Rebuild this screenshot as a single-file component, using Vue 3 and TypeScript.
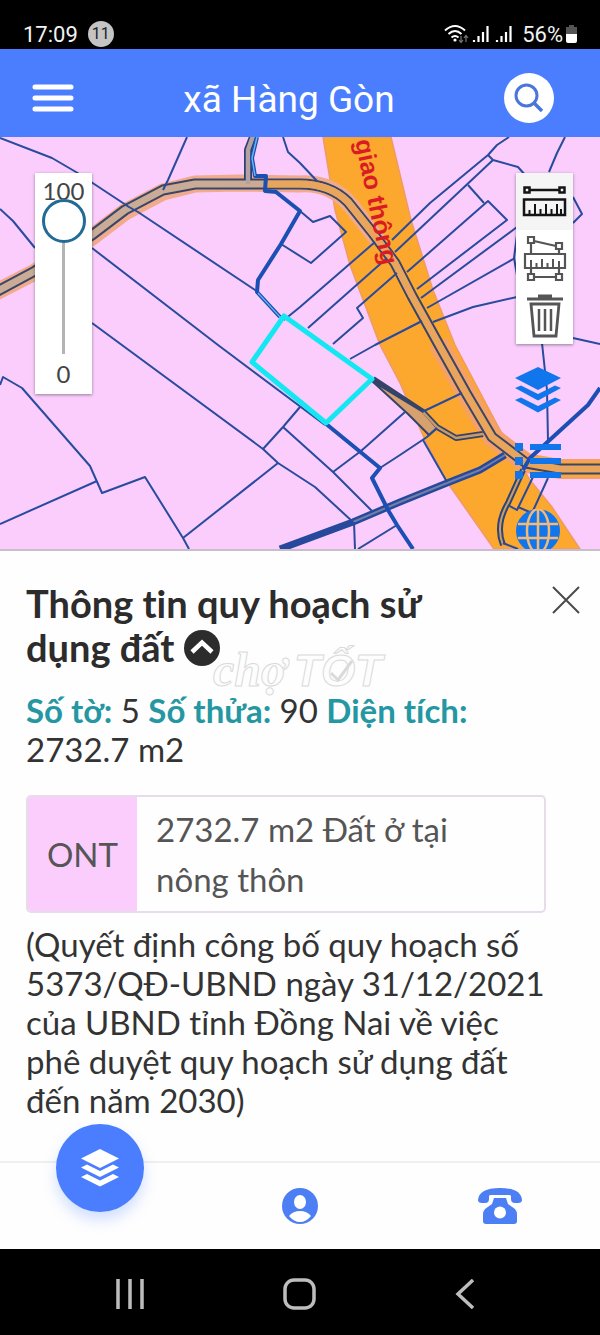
<script setup lang="ts">
import { ref } from 'vue'

const opacity = ref(100)

const boundaries: string[] = [
  'M0 138 52 158 76 172 129 207 138 212 258 292',
  'M187 137 168 180 163 190',
  'M0 209 13 221 35 248',
  'M92 248 218 345 325 425',
  'M92 323 263 449 278 463 315 487 353 522',
  'M0 385 3 377 22 388 90 466 102 493 145 477 183 538 189 549',
  'M0 524 97 481',
  'M183 538 278 463',
  'M263 449 283 427 300 407',
  'M283 427 333 472 373 512',
  'M333 472 361 451 405 412',
  'M354 522 355 549',
  'M358 549 397 525',
  'M283 137 288 152 300 163 317 181',
  'M300 211 313 222 330 216 346 232 311 263 281 244',
  'M375 242 300 307 284 320',
  'M387 258 308 328',
  'M397 273 357 308 363 318 333 344',
  'M422 321 375 345 350 359',
  'M392 240 430 203 488 155 497 145 509 137',
  'M395 252 493 160',
  'M488 155 493 160 518 167 526 176',
  'M407 272 488 201 507 220 417 289',
  'M468 185 484 203',
  'M421 298 517 227',
  'M427 308 515 258',
  'M517 235 514 258 517 275',
  'M433 322 457 313 473 307 517 297',
  'M565 137 557 153 549 172',
  'M573 197 582 214 573 223',
  'M573 338 600 344',
  'M542 343 547 390 548 441',
  'M422 412 462 393',
  'M437 428 427 437 400 455 380 468',
  'M423 440 447 482',
  'M533 477 517 510 508 505',
  'M548 478 532 513 518 507',
  'M503 543 518 549',
]

const waterways: string[] = [
  'M276 192 300 211 281 244 258 280 257 292 280 317',
  'M325 423 380 468 372 478 388 510 397 525 413 549',
  'M600 388 588 405 530 458 523 470',
]
</script>

<template>
  <div class="app">
    <div class="status">
      <span class="status-left">
        <span class="clock">17:09</span>
        <span class="count">11</span>
      </span>
      <span class="status-right">
        <svg width="70" height="22" viewBox="0 0 70 22" aria-hidden="true">
          <g fill="none" stroke="#fff" stroke-width="2">
            <path d="M1 7.5Q11 -1.500 21 7.500M4.500 11Q11 5 17.500 11M7.500 14.500Q11 11.500 14.500 14.500" />
          </g>
          <circle cx="11" cy="17" r="1.600" fill="#fff" />
          <path d="M17 13v6m-2-2 2 2.500 2-2.500M22 19v-6m-2 2 2-2.500 2 2.500" fill="none" stroke="#777" stroke-width="1.200" />
          <path d="M30 19v-2M34.500 19v-6M39 19V9M43.500 19V3" stroke="#fff" stroke-width="2.200" />
          <path d="M53 19v-2M57.500 19v-6M62 19V9M66.500 19V3" stroke="#fff" stroke-width="2.200" />
        </svg>
        <span class="clock">56%</span>
        <svg width="14" height="22" viewBox="0 0 14 22" aria-hidden="true">
          <path d="M4 2h5v2h3v7H1V4h3z" fill="#555" />
          <path d="M1 11h11v7q0 2-2 2H3q-2 0-2-2z" fill="#fff" />
        </svg>
      </span>
    </div>

    <header class="header">
      <button class="icon-btn" aria-label="Menu">
        <svg width="42" height="30" viewBox="0 0 42 30">
          <path d="M3 4H39M3 15H39M3 26H39" stroke="#fff" stroke-width="5" stroke-linecap="round" />
        </svg>
      </button>
      <h1>xã Hàng Gòn</h1>
      <button class="search" aria-label="Tìm kiếm">
        <svg width="30" height="30" viewBox="0 0 30 30">
          <circle cx="12.500" cy="12.500" r="10.500" fill="none" stroke="#4a76dc" stroke-width="3" />
          <path d="M20 20 28 28" stroke="#4a76dc" stroke-width="3.500" />
        </svg>
      </button>
    </header>

    <section class="map">
      <svg class="map-canvas" viewBox="0 137 600 412" aria-label="Bản đồ">
        <rect y="137" width="600" height="412" fill="#facdfd" />
        <path
          d="M323 137H391L411 220 433 290 455 345 500 430 530 480 552 507 580 549H494L447 482 425 440 400 383 380 345 365 305 350 265 335 210Z"
          fill="#fca72d" stroke="#f09a66" stroke-width="1.500"
        />
        <g fill="none" stroke-linejoin="round">
          <path
            d="M-4 292 35 272 92 237 125 212 163 192 195 184 240 183 300 184Q332 182 352 207L378 240"
            stroke="#f0ab8d" stroke-width="17"
          />
          <path d="M438 343 466 393 492 437 526 463 560 469H600" stroke="#f4a168" stroke-width="20" />
          <path d="M530 463 560 469H600" stroke="#f9a640" stroke-width="16" />
          <path
            d="M-4 292 35 271 92 235 125 210 163 190 195 184 240 184 300 184Q330 184 348 202L372 232 395 263 412 296 438 343 466 393 492 437 526 463 560 469H600"
            stroke="#3b4566" stroke-width="11"
          />
          <path
            d="M-4 292 35 271 92 235 125 210 163 190 195 184 240 184 300 184Q330 184 348 202L372 232 395 263 412 296"
            stroke="#c9ab96" stroke-width="7"
          />
          <path
            d="M265 184H300Q330 184 348 202L372 232 395 263 412 296 438 343 466 393 492 437 526 463 560 469H601"
            stroke="#e9a55b" stroke-width="7"
          />
          <path d="M253 137 248 150V180" stroke="#294077" stroke-width="8" />
          <path d="M253 136 248 150V184" stroke="#b5a2a0" stroke-width="4.500" />
          <path d="M257 137 252 158 255 176 266 176 265 191 277 192" stroke="#1d4fb0" stroke-width="4" />
          <path d="M257 137 252 158 255 176" stroke="#67b5f1" stroke-width="1.500" />
          <path d="M373 379 423 412 437 427 456 438 483 434" stroke="#35436a" stroke-width="6" />
          <path d="M372 381 408 414 429 435 437 428 423 412Z" fill="#d7a16d" stroke="#35436a" stroke-width="2" />
          <path d="M423 412 437 427 456 438 483 434" stroke="#c89c66" stroke-width="2.500" />
          <path d="M280 549 353 522 400 502 447 483 480 470 505 455" stroke="#27499c" stroke-width="7" />
          <path d="M353 522 400 502 447 483 480 470 505 455" stroke="#727fa9" stroke-width="2" />
          <path d="M523 470 508 503Q495 525 503 545" stroke="#2b4578" stroke-width="6" />
          <path d="M523 470 508 503Q495 525 503 545" stroke="#c99c66" stroke-width="2" />
          <path v-for="d in boundaries" :key="d" :d="d" stroke="#294b9d" stroke-width="2" />
          <path v-for="d in waterways" :key="d" :d="d" stroke="#1b4fb4" stroke-width="4" />
          <path d="M258 293 280 317" stroke="#63b6ef" stroke-width="1.200" />
          <path d="M284 316 372 379 326 423 252 362Z" stroke="#13e7f2" stroke-width="5" />
        </g>
        <text class="road-name" transform="translate(355 141) rotate(78)">giao thông</text>
      </svg>

      <div class="slider">
        <label for="opacity">{{ opacity }}</label>
        <input id="opacity" v-model.number="opacity" type="range" min="0" max="100" />
        <span>0</span>
      </div>

      <div class="tools">
        <button class="tool active" aria-label="Đo chiều dài">
          <svg width="46" height="34" viewBox="0 0 46 34">
            <g fill="none" stroke="#151515" stroke-width="2.500">
              <path d="M2.500 2.500h5v5h-5zM37.500 2.500h5v5h-5zM8 5H37M2 14.500H43V30H2z" />
              <path d="M7.500 30v-5M13 30V19M18.500 30v-6M24 30V19M29.500 30v-6M35 30V19M39 30v-6" stroke-width="2" />
            </g>
          </svg>
        </button>
        <button class="tool" aria-label="Đo diện tích">
          <svg width="46" height="48" viewBox="0 0 46 48">
            <g fill="none" stroke="#555" stroke-width="2.200">
              <path d="M6 2h6v6H6zM34 8h6v6h-6zM6 39h6v6H6zM34 39h6v6h-6zM12 6 34 11M12 42H34M9 8V19M37 14V19M9 33v6M37 33v6M3 19H43V33H3z" />
              <path d="M9 33v-8M14.500 33v-5M20 33v-9M25.500 33v-5M31 33v-9M37 33v-7" stroke-width="2" />
            </g>
          </svg>
        </button>
        <button class="tool" aria-label="Xóa">
          <svg width="40" height="46" viewBox="0 0 40 46">
            <path d="M2 6H38M13 3H27" stroke="#555" stroke-width="3" />
            <path d="M6 11H34L31 43H9z" fill="none" stroke="#555" stroke-width="2.800" />
            <path d="M14 16V38M20 16V38M26 16V38" stroke="#555" stroke-width="2.500" />
          </svg>
        </button>
      </div>

      <div class="shortcuts">
        <button class="shortcut" aria-label="Lớp bản đồ">
          <svg width="46" height="46" viewBox="0 0 46 46" fill="#1176ec">
            <path d="M23 0 46 11 23 23 0 11Z" />
            <path d="M0 21 6 18.500 23 27 40 18.500 46 21 23 33.500Z" />
            <path d="M0 33 6 30.500 23 39 40 30.500 46 33 23 45.500Z" />
          </svg>
        </button>
        <button class="shortcut" aria-label="Chú giải">
          <svg width="46" height="36" viewBox="0 0 46 36" fill="#1176ec">
            <path d="M0 0h8v8H0zM15 1h31v6H15zM0 14h8v8H0zM15 15h31v6H15zM0 28h8v8H0zM15 29h31v6H15z" />
          </svg>
        </button>
        <button class="shortcut" aria-label="Bản đồ nền">
          <svg width="44" height="44" viewBox="0 0 44 44">
            <circle cx="22" cy="22" r="22" fill="#1176ec" />
            <g fill="none" stroke="#f2b979" stroke-width="2.500">
              <path d="M22 0V44M2 15H42M2 29H42" />
              <ellipse cx="22" cy="22" rx="11" ry="22" />
            </g>
          </svg>
        </button>
      </div>
    </section>

    <main class="panel">
      <svg class="watermark" width="184" height="76" viewBox="0 0 184 76" aria-hidden="true">
        <g fill="#fdfdfd" stroke="#dadada" stroke-width="1">
          <text x="3" y="53" class="wm-serif">chợ</text>
          <text x="84" y="53" class="wm-sans">TỐT</text>
        </g>
        <path d="m121 40 7 7 14-19" fill="none" stroke="#dadada" stroke-width="3" />
      </svg>
      <div class="title-row">
        <h2>
          Thông tin quy hoạch sử dụng đất
          <button class="collapse" aria-label="Thu gọn">
            <svg width="36" height="36" viewBox="0 0 36 36">
              <circle cx="18" cy="18" r="18" fill="#2c2c2c" />
              <path d="M8 22 18 12.500 28 22" fill="none" stroke="#fff" stroke-width="4.500" />
            </svg>
          </button>
        </h2>
        <button class="close" aria-label="Đóng">
          <svg width="28" height="28" viewBox="0 0 28 28">
            <path d="M1 1 27 27M27 1 1 27" stroke="#4a4a4a" stroke-width="2" />
          </svg>
        </button>
      </div>

      <p class="facts">
        <strong>Số tờ:</strong> 5 <strong>Số thửa:</strong> 90 <strong>Diện tích:</strong> 2732.7 m2
      </p>

      <div class="land">
        <div class="land-code">ONT</div>
        <div class="land-name">2732.7 m2 Đất ở tại nông thôn</div>
      </div>

      <p class="note">
        (Quyết định công bố quy hoạch số 5373/QĐ-UBND ngày 31/12/2021 của UBND tỉnh Đồng Nai về việc phê duyệt quy hoạch sử dụng đất đến năm 2030)
      </p>
    </main>

    <nav class="tabs">
      <div class="tab">
        <button class="fab" aria-label="Quy hoạch">
          <svg width="40" height="38" viewBox="0 0 40 38" fill="#fff">
            <path d="M20 0 39 9.500 20 19 1 9.500Z" />
            <path d="M1 18.500 7 15.500 20 22 33 15.500 39 18.500 20 28Z" />
            <path d="M1 28 7 25 20 31.500 33 25 39 28 20 37.500Z" />
          </svg>
        </button>
      </div>
      <button class="tab" aria-label="Tài khoản">
        <svg width="36" height="36" viewBox="0 0 36 36">
          <circle cx="18" cy="18" r="18" fill="#4b7ff3" />
          <ellipse cx="18" cy="14" rx="6" ry="7" fill="#fff" />
          <path d="M7 28Q11 23 18 23T29 28Q24 34 18 34T7 28Z" fill="#fff" />
        </svg>
      </button>
      <button class="tab" aria-label="Liên hệ">
        <svg width="46" height="38" viewBox="0 0 46 38">
          <path d="M1 13Q2 1 23 1T45 13Q45 16 41 16H38Q34 16 34 12V9Q34 8 32 8H14Q12 8 12 9V12Q12 16 8 16H5Q1 16 1 13Z" fill="#4b7ff3" />
          <path d="M17 11H29L31 17 38 22Q40 24 40 28V34Q40 37 37 37H9Q6 37 6 34V28Q6 24 8 22L15 17Z" fill="#4b7ff3" />
          <ellipse cx="23" cy="25.500" rx="6" ry="6" fill="#fff" />
        </svg>
      </button>
    </nav>

    <footer class="system">
      <button aria-label="Ứng dụng gần đây">
        <svg width="30" height="30" viewBox="0 0 30 30">
          <path d="M3 0V30M15 0V30M27 0V30" stroke="#bdbdbd" stroke-width="3.500" />
        </svg>
      </button>
      <button aria-label="Màn hình chính">
        <svg width="34" height="32" viewBox="0 0 34 32">
          <rect x="2" y="2" width="29" height="28" rx="9" fill="none" stroke="#bdbdbd" stroke-width="3.500" />
        </svg>
      </button>
      <button aria-label="Quay lại">
        <svg width="20" height="30" viewBox="0 0 20 30">
          <path d="M18 1 3 15 18 29" fill="none" stroke="#bdbdbd" stroke-width="3.500" />
        </svg>
      </button>
    </footer>
  </div>
</template>

<style>
body {
  margin: 0;
}
</style>

<style scoped>
.app {
  min-height: 100vh;
  display: flex;
  flex-direction: column;
  background: #fefefe;
  font-family: Lato, "Noto Sans", sans-serif;
  font-variant-ligatures: none;
  color: #333;
}

button {
  padding: 0;
  border: 0;
  background: none;
  display: flex;
  align-items: center;
  justify-content: center;
  cursor: pointer;
}

svg {
  display: block;
}

.status {
  box-sizing: border-box;
  height: 49px;
  padding: 20px 21px 0 23px;
  background: #000;
  color: #f2f2f2;
  display: flex;
  justify-content: space-between;
  font-family: Roboto, sans-serif;
}

.status-left,
.status-right {
  height: 28px;
  display: flex;
  align-items: center;
  gap: 8px;
}

.status-left {
  gap: 10px;
}

.clock {
  font-size: 22px;
}

.status-right .clock + svg {
  margin-left: -6px;
}

.count {
  width: 26px;
  height: 26px;
  border-radius: 50%;
  background: #c4c4c4;
  color: #222;
  font-size: 16px;
  line-height: 26px;
  text-align: center;
}

.header {
  height: 88px;
  padding: 0 46px 0 32px;
  background: #4a7eff;
  display: flex;
  align-items: center;
  justify-content: space-between;
}

.header h1 {
  margin: 14px 0 0;
  color: #fff;
  font: 400 37px/48px Roboto, sans-serif;
}

.icon-btn {
  margin-top: 10px;
}

.search {
  width: 50px;
  height: 50px;
  margin-top: 10px;
  border-radius: 50%;
  background: #fff;
}

.map {
  position: relative;
  overflow: hidden;
  border-bottom: 2px solid #c9bdcb;
  margin-bottom: -2px;
}

.map-canvas {
  width: 100%;
  height: auto;
}

.road-name {
  font: 700 25px "Liberation Sans", sans-serif;
  fill: #d91c24;
}

.slider {
  position: absolute;
  left: 35px;
  top: 36px;
  width: 57px;
  height: 221px;
  background: #fff;
  box-shadow: 0 1px 3px rgba(0, 0, 0, 0.4);
  display: flex;
  flex-direction: column;
  align-items: center;
  color: #444;
  font-size: 24px;
  line-height: 28px;
}

.slider label {
  margin-top: 4px;
}

.slider input {
  appearance: none;
  writing-mode: vertical-lr;
  direction: rtl;
  width: 44px;
  height: 155px;
  margin: -6px 0 6px;
  background: linear-gradient(#b4b4b4, #b4b4b4) center / 3px 100% no-repeat;
}

.slider input::-webkit-slider-thumb {
  appearance: none;
  box-sizing: border-box;
  width: 44px;
  height: 44px;
  border: 3px solid #216b96;
  border-radius: 50%;
  background: #fff;
}

.tools {
  position: absolute;
  right: 27px;
  top: 36px;
  width: 57px;
  background: #fff;
  box-shadow: 0 1px 3px rgba(0, 0, 0, 0.4);
}

.tool {
  width: 100%;
  height: 57px;
}

.tool.active {
  background: #f5f5f5;
}

.shortcuts {
  position: absolute;
  right: 39px;
  top: 230px;
  display: flex;
  flex-direction: column;
  align-items: center;
  gap: 30px;
}

.panel {
  position: relative;
  flex: 1;
  padding: 32px 20px 0 26px;
}

.watermark {
  position: absolute;
  left: 210px;
  top: 84px;
}

.wm-serif {
  font: italic 700 48px "Liberation Serif", serif;
}

.wm-sans {
  font: italic 700 44px "Liberation Sans", sans-serif;
}

.title-row {
  display: flex;
  align-items: flex-start;
  justify-content: space-between;
}

h2 {
  position: relative;
  margin: 0;
  max-width: 440px;
  font-size: 38px;
  line-height: 44px;
  font-weight: 700;
  color: #2c2c2c;
}

.collapse {
  display: inline-flex;
  vertical-align: -4px;
}

.close {
  margin-top: 5px;
}

.facts {
  margin: 22px 60px 0 0;
  font-size: 33px;
  line-height: 39px;
}

.facts strong {
  color: #2497a3;
}

.land {
  margin: 26px 34px 0 0;
  border: 2px solid #e6dcea;
  border-radius: 5px;
  display: flex;
  color: #555;
  font-size: 33px;
  line-height: 50px;
  overflow: hidden;
}

.land-code {
  width: 109px;
  background: #fbcdfd;
  display: flex;
  align-items: center;
  justify-content: center;
}

.land-name {
  flex: 1;
  padding: 7px 60px 7px 19px;
}

.note {
  margin: 12px 28px 0 0;
  font-size: 33px;
  line-height: 39px;
}

.tabs {
  height: 86px;
  border-top: 2px solid #efefef;
  display: grid;
  grid-template-columns: repeat(3, 1fr);
}

.tab {
  display: flex;
  justify-content: center;
  align-items: center;
}

.fab {
  width: 88px;
  height: 88px;
  margin-top: -76px;
  border-radius: 50%;
  background: #4a7eff;
  box-shadow: 0 8px 14px rgba(74, 126, 255, 0.25);
}

.system {
  height: 86px;
  background: #000;
  display: flex;
  align-items: center;
  justify-content: space-between;
  padding: 4px 125px 0 115px;
  box-sizing: border-box;
}
</style>
